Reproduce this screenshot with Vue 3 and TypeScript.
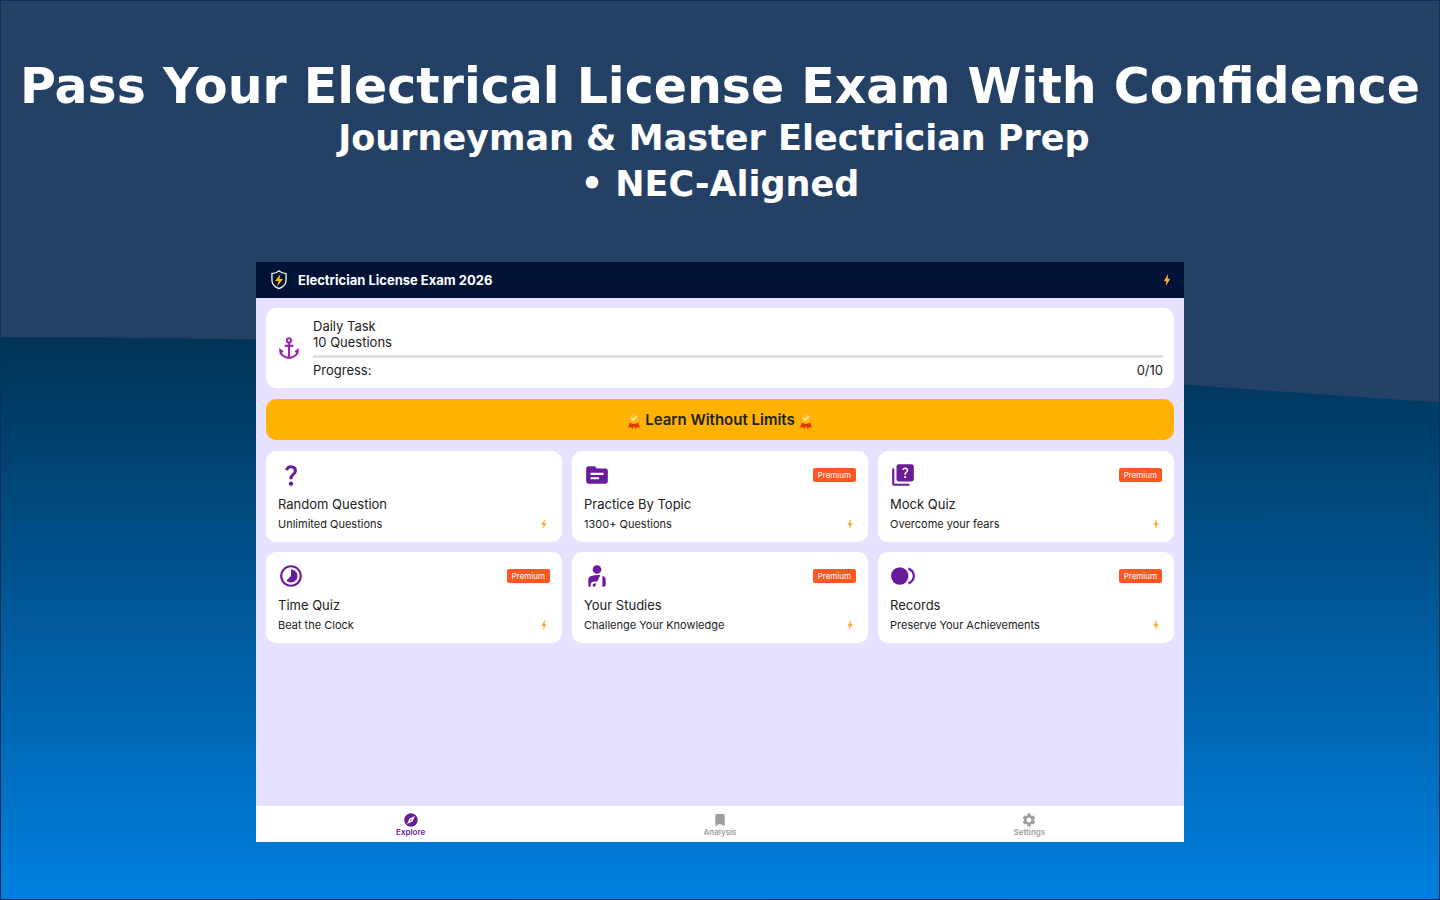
<script setup lang="ts">
import { ref } from 'vue'

interface Tile {
  title: string
  subtitle: string
  paths: string[]
  premium: boolean
}

interface Tab {
  label: string
  path: string
}

const boltPath =
  'M11 21h-1l1-7H7.5c-.58 0-.57-.32-.38-.66C8.48 10.94 10.42 7.54 13 3h1l-1 7h3.5c.49 0 .56.33.47.51l-.07.15C12.96 17.55 11 21 11 21z'

const tiles: Tile[] = [
  {
    title: 'Random Question',
    subtitle: 'Unlimited Questions',
    premium: false,
    paths: [
      'M11.07 12.85c.77-1.39 2.25-2.21 3.11-3.44.91-1.29.4-3.7-2.18-3.7-1.69 0-2.52 1.28-2.87 2.34L6.54 6.96C7.25 4.83 9.18 3 11.99 3c2.35 0 3.96 1.07 4.78 2.41.7 1.15 1.11 3.3.03 4.9-1.2 1.77-2.35 2.31-2.97 3.45-.25.46-.35.76-.35 2.24h-2.89c-.01-.78-.13-2.05.48-3.15zM14 20c0 1.1-.9 2-2 2s-2-.9-2-2 .9-2 2-2 2 .9 2 2z',
    ],
  },
  {
    title: 'Practice By Topic',
    subtitle: '1300+ Questions',
    premium: true,
    paths: [
      'M20 6h-8l-2-2H4c-1.1 0-1.99.9-1.99 2L2 18c0 1.1.9 2 2 2h16c1.1 0 2-.9 2-2V8c0-1.1-.9-2-2-2zm-6 10H6v-2h8v2zm4-4H6v-2h12v2z',
    ],
  },
  {
    title: 'Mock Quiz',
    subtitle: 'Overcome your fears',
    premium: true,
    paths: [
      'M4 6H2v14c0 1.1.9 2 2 2h14v-2H4V6z',
      'M20 2H8c-1.1 0-2 .9-2 2v12c0 1.1.9 2 2 2h12c1.1 0 2-.9 2-2V4c0-1.1-.9-2-2-2zm-5.99 13c-.59 0-1.05-.47-1.05-1.05 0-.59.47-1.04 1.05-1.04.59 0 1.04.45 1.04 1.04-.01.58-.45 1.05-1.04 1.05zm2.5-6.17c-.63.93-1.23 1.21-1.56 1.81-.13.24-.18.4-.18 1.18h-1.52c0-.41-.06-1.08.26-1.65.41-.73 1.18-1.16 1.63-1.8.48-.68.21-1.94-1.14-1.94-.88 0-1.32.67-1.5 1.23l-1.37-.57C11.51 5.96 12.52 5 13.99 5c1.23 0 2.08.56 2.51 1.26.37.6.58 1.73.01 2.57z',
    ],
  },
  {
    title: 'Time Quiz',
    subtitle: 'Beat the Clock',
    premium: true,
    paths: [
      'M16.24 7.76C15.07 6.59 13.54 6 12 6v6l-4.24 4.24c2.34 2.34 6.14 2.34 8.49 0 2.34-2.34 2.34-6.14-.01-8.48zM12 2C6.48 2 2 6.48 2 12s4.48 10 10 10 10-4.48 10-10S17.52 2 12 2zm0 18c-4.42 0-8-3.58-8-8s3.58-8 8-8 8 3.58 8 8-3.58 8-8 8z',
    ],
  },
  {
    title: 'Your Studies',
    subtitle: 'Challenge Your Knowledge',
    premium: true,
    paths: [
      'M8 6c0-2.21 1.79-4 4-4s4 1.79 4 4-1.79 4-4 4-4-1.79-4-4z',
      'M17 22h1c1.1 0 2-.9 2-2v-4.78c0-1.12-.61-2.15-1.61-2.66-.43-.22-.9-.43-1.39-.62V22z',
      'M12.34 17L15 11.33C14.07 11.12 13.07 11 12 11c-2.53 0-4.71.7-6.39 1.56C4.61 13.07 4 14.1 4 15.22V22h2.34C6.12 21.55 6 21.04 6 20.5 6 18.57 7.57 17 9.5 17h2.84z',
      'M10 22l1.41-3H9.5c-.83 0-1.5.67-1.5 1.5S8.67 22 9.5 22h.5z',
    ],
  },
  {
    title: 'Records',
    subtitle: 'Preserve Your Achievements',
    premium: true,
    paths: [
      'M1 12a8 8 0 1 0 16 0 8 8 0 1 0-16 0z',
      'M17 4.26v2.09c2.33.82 4 3.04 4 5.65s-1.67 4.83-4 5.65v2.09c3.45-.89 6-4.01 6-7.74s-2.55-6.85-6-7.74z',
    ],
  },
]

const tabs: Tab[] = [
  {
    label: 'Explore',
    path: 'M12 10.9c-.61 0-1.1.49-1.1 1.1s.49 1.1 1.1 1.1c.61 0 1.1-.49 1.1-1.1s-.49-1.1-1.1-1.1zM12 2C6.48 2 2 6.48 2 12s4.48 10 10 10 10-4.48 10-10S17.52 2 12 2zm2.19 12.19L6 18l3.81-8.19L18 6l-3.81 8.19z',
  },
  {
    label: 'Analysis',
    path: 'M17 3H7c-1.1 0-1.99.9-1.99 2L5 21l7-3 7 3V5c0-1.1-.9-2-2-2z',
  },
  {
    label: 'Settings',
    path: 'M19.14 12.94c.04-.3.06-.61.06-.94 0-.32-.02-.64-.07-.94l2.03-1.58c.18-.14.23-.41.12-.61l-1.92-3.32c-.12-.22-.37-.29-.59-.22l-2.39.96c-.5-.38-1.03-.7-1.62-.94l-.36-2.54c-.04-.24-.24-.41-.48-.41h-3.84c-.24 0-.43.17-.47.41l-.36 2.54c-.59.24-1.13.57-1.62.94l-2.39-.96c-.22-.08-.47 0-.59.22L2.74 8.87c-.12.21-.08.47.12.61l2.03 1.58c-.05.3-.09.63-.09.94s.02.64.07.94l-2.03 1.58c-.18.14-.23.41-.12.61l1.92 3.32c.12.22.37.29.59.22l2.39-.96c.5.38 1.03.7 1.62.94l.36 2.54c.05.24.24.41.48.41h3.84c.24 0 .44-.17.47-.41l.36-2.54c.59-.24 1.13-.56 1.62-.94l2.39.96c.22.08.47 0 .59-.22l1.92-3.32c.12-.22.07-.47-.12-.61l-2.01-1.58zM12 15.6c-1.98 0-3.6-1.62-3.6-3.6s1.62-3.6 3.6-3.6 3.6 1.62 3.6 3.6-1.62 3.6-3.6 3.6z',
  },
]

const activeTab = ref('Explore')
</script>

<template>
  <main class="page">
    <svg class="backdrop" viewBox="0 0 1440 900" preserveAspectRatio="none" aria-hidden="true">
      <path d="M0 0H1440V402C1120 382 640 337 0 337Z" fill="#244165" />
    </svg>

    <header class="hero">
      <h1>Pass Your Electrical License Exam With Confidence</h1>
      <p>Journeyman &amp; Master Electrician Prep&nbsp;</p>
      <p>• NEC-Aligned</p>
    </header>

    <section class="app">
      <div class="topbar">
        <svg class="shield" viewBox="0 0 24 24" aria-hidden="true">
          <path d="M12 2C10 4 7.500 4.900 4.300 5v7.300c0 4.200 3.300 7.400 7.700 9.200 4.400-1.800 7.700-5 7.700-9.200V5C16.500 4.900 14 4 12 2z" fill="#001233" stroke="#fff" stroke-width="1.400" />
          <path d="M13.600 5.500L7.700 13h3.600l-1.200 6 6.200-8h-3.700z" fill="#ffb703" />
        </svg>
        <h2>Electrician License Exam 2026</h2>
        <svg class="bolt bolt-top" viewBox="0 0 24 24" aria-hidden="true"><path :d="boltPath" /></svg>
      </div>

      <div class="content">
        <article class="daily">
          <svg class="icon anchor" viewBox="0 0 24 24" aria-hidden="true">
            <path d="M17 15l1.550 1.550c-.96 1.690-3.330 3.040-5.550 3.370V11h3V9h-3V7.820C14.160 7.400 15 6.300 15 5c0-1.650-1.350-3-3-3S9 3.350 9 5c0 1.300.84 2.400 2 2.820V9H8v2h3v8.920c-2.220-.33-4.590-1.680-5.550-3.370L7 15l-4-3v3c0 3.880 4.920 7 9 7s9-3.120 9-7v-3l-4 3zM12 4c.55 0 1 .45 1 1s-.45 1-1 1-1-.45-1-1 .45-1 1-1z" />
          </svg>
          <div class="daily-body">
            <p>Daily Task</p>
            <p>10 Questions</p>
            <div class="track" role="progressbar" aria-label="Progress" aria-valuenow="0" aria-valuemin="0" aria-valuemax="10"></div>
            <div class="daily-foot"><span>Progress:</span><span>0/10</span></div>
          </div>
        </article>

        <button class="upgrade" type="button">
          <svg v-for="side in 2" :key="side" class="medal" :class="{ last: side === 2 }" viewBox="0 0 14 18" aria-hidden="true">
            <path d="M3 11L1 17l3-1 1.500 2L7 15l1.500 3 1.500-2 3 1-2-6z" fill="#e53411" />
            <circle cx="7" cy="7" r="6" fill="#ffa514" />
            <circle cx="7" cy="7" r="4.800" fill="#ffbd22" />
            <path d="M4.500 7.200l1.800 1.700 3.400-3.700" fill="none" stroke="#fff1b8" stroke-width="1.200" />
          </svg>
          <span>Learn Without Limits</span>
        </button>

        <div class="grid">
          <button v-for="tile in tiles" :key="tile.title" class="tile" type="button">
            <span class="tile-head">
              <svg class="icon" viewBox="0 0 24 24" aria-hidden="true">
                <path v-for="d in tile.paths" :key="d" :d="d" />
              </svg>
              <span v-if="tile.premium" class="badge">Premium</span>
            </span>
            <span class="tile-title">{{ tile.title }}</span>
            <span class="tile-foot">
              <span>{{ tile.subtitle }}</span>
              <svg class="bolt" viewBox="0 0 24 24" aria-hidden="true"><path :d="boltPath" /></svg>
            </span>
          </button>
        </div>
      </div>

      <nav class="tabs">
        <button
          v-for="tab in tabs"
          :key="tab.label"
          class="tab"
          :class="{ active: tab.label === activeTab }"
          type="button"
          @click="activeTab = tab.label"
        >
          <svg viewBox="0 0 24 24" aria-hidden="true"><path :d="tab.path" /></svg>
          <span>{{ tab.label }}</span>
        </button>
      </nav>
    </section>
  </main>
</template>

<style>
body {
  margin: 0;
}
</style>

<style scoped>
.page {
  position: relative;
  box-sizing: border-box;
  min-height: 100vh;
  padding: 58px 0 57px;
  border: 1px solid #0b2f58;
  display: flex;
  flex-direction: column;
  align-items: center;
  background: linear-gradient(#003355 38%, #0080e0 100%);
  font-family: Inter, "Open Sans", sans-serif;
  color: #212121;
  overflow: hidden;
}
.backdrop {
  position: absolute;
  inset: 0;
  width: 100%;
  height: 100%;
}
.hero {
  position: relative;
  margin-bottom: 55px;
  text-align: center;
  color: #fff;
  font-family: "DejaVu Sans", sans-serif;
  font-weight: 700;
}
h1,
h2,
p {
  margin: 0;
}
.hero h1 {
  font-size: 49px;
  line-height: 56px;
  white-space: nowrap;
}
.hero p {
  font-size: 35px;
  line-height: 46px;
}
.app {
  position: relative;
  width: 100%;
  max-width: 928px;
  flex: 1;
  display: flex;
  flex-direction: column;
  background: #e7e2ff;
}
.topbar {
  box-sizing: border-box;
  height: 36px;
  padding: 0 10px 0 12px;
  display: flex;
  align-items: center;
  gap: 8px;
  background: #001336;
  color: #fff;
}
.topbar h2 {
  flex: 1;
  font-size: 13px;
  line-height: 20px;
}
.shield {
  width: 22px;
  height: 22px;
}
.bolt {
  width: 12px;
  height: 12px;
  flex: none;
  fill: #ffab40;
}
.bolt-top {
  width: 14px;
  height: 14px;
}
.content {
  flex: 1;
  padding: 10px;
  display: flex;
  flex-direction: column;
  gap: 11px;
}
.icon {
  width: 26px;
  height: 26px;
  flex: none;
  fill: #6a1b9a;
}
.anchor {
  fill: #9c27b0;
}
.daily {
  padding: 10px 11px 10px 10px;
  border-radius: 10px;
  display: flex;
  align-items: center;
  gap: 11px;
  background: #fff;
}
.daily-body {
  flex: 1;
  font-size: 13px;
  line-height: 16px;
}
.track {
  height: 3px;
  margin: 5px 0 4px;
  background: #e0e0e0;
}
.daily-foot {
  display: flex;
  justify-content: space-between;
}
button {
  border: 0;
  margin: 0;
  font-family: inherit;
  color: inherit;
  cursor: pointer;
}
.upgrade {
  height: 41px;
  padding: 0;
  border-radius: 10px;
  display: flex;
  align-items: center;
  justify-content: center;
  gap: 4px;
  background: #ffb300;
  font-size: 15px;
  line-height: 20px;
  font-weight: 600;
}
.medal {
  width: 14px;
  height: 18px;
}
.medal.last {
  order: 1;
}
.grid {
  display: grid;
  grid-template-columns: repeat(3, 1fr);
  gap: 10px;
}
.tile {
  padding: 11px 12px 8px;
  border-radius: 10px;
  display: flex;
  flex-direction: column;
  background: #fff;
  text-align: left;
}
.tile-head {
  display: flex;
  align-items: center;
  justify-content: space-between;
  margin-bottom: 6px;
}
.tile-title {
  font-size: 13px;
  line-height: 20px;
}
.tile-foot {
  display: flex;
  align-items: center;
  justify-content: space-between;
  font-size: 11px;
  line-height: 20px;
}
.badge {
  padding: 0 5px;
  border-radius: 2px;
  background: #ff5722;
  color: #fff;
  font-size: 8px;
  line-height: 14px;
}
.tabs {
  display: grid;
  grid-template-columns: repeat(3, 1fr);
  background: #fff;
}
.tab {
  height: 36px;
  padding: 0;
  display: flex;
  flex-direction: column;
  align-items: center;
  justify-content: center;
  background: none;
  color: #9e9e9e;
  font-size: 8px;
  line-height: 9px;
  font-weight: 600;
}
.tab svg {
  width: 16px;
  height: 16px;
  fill: currentColor;
}
.tab.active {
  color: #6a1b9a;
}
</style>
